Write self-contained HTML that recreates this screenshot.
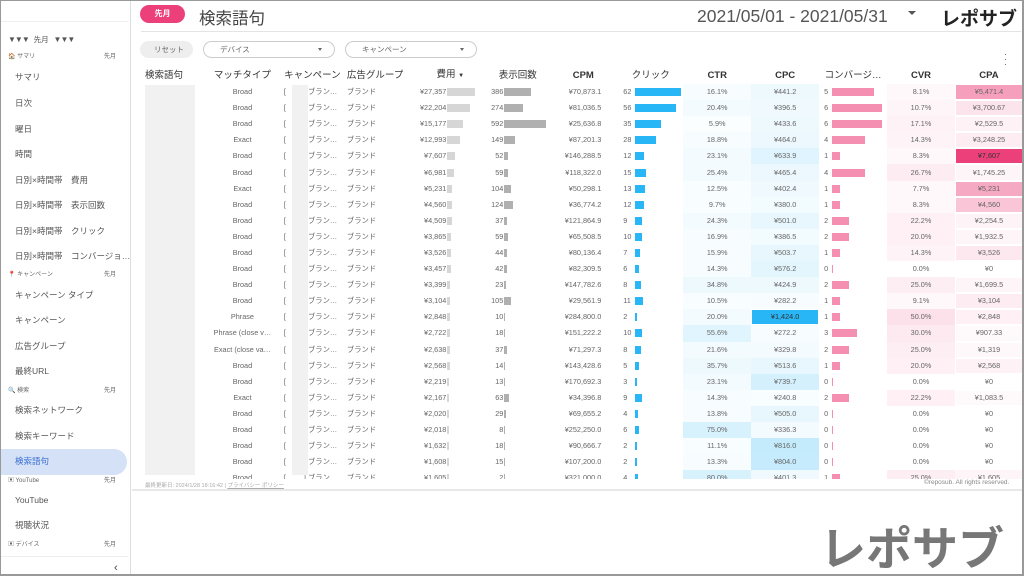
<!DOCTYPE html>
<html><head><meta charset="utf-8"><style>
*{margin:0;padding:0;box-sizing:border-box}
body{width:1024px;height:576px;overflow:hidden;background:#fff;font-family:"Liberation Sans","Noto Sans CJK JP",sans-serif;color:#555;position:relative}
.frame{position:absolute;left:0;top:0;width:1024px;height:576px;border:1px solid #999;border-bottom:2px solid #999;border-right:2px solid #999;pointer-events:none;z-index:10}
.sb{position:absolute;left:0;top:0;width:131px;height:576px;border-right:1px solid #ddd;background:#fff}
.sb .it{position:absolute;left:15px;font-size:8.5px;color:#555;line-height:10px;white-space:nowrap}
.sb .hd{position:absolute;left:8px;width:110px;font-size:6px;color:#666;line-height:8px}
.sb .hd span{position:absolute;right:2px;top:0}
.sel{position:absolute;left:0;top:449px;width:127px;height:26px;background:#d4e1f7;border-radius:0 13px 13px 0}
.abs{position:absolute;white-space:nowrap}
.pill{position:absolute;left:140px;top:5px;width:45px;height:18px;border-radius:9px;background:#ec407a;color:#fff;font-size:8px;text-align:center;line-height:18px;font-weight:bold}
.flt{position:absolute;top:41px;height:17px;border:1px solid #ccc;border-radius:9px;font-size:7.5px;line-height:15px;padding-left:16px;color:#666}
.flt.d:after{content:"";position:absolute;right:12px;top:6px;border:2.5px solid transparent;border-top:3px solid #666}
table{position:absolute;left:133px;top:67px;border-collapse:collapse;table-layout:fixed;font-size:7.3px;color:#666}
td,th{height:16.1px;padding:0;white-space:nowrap;overflow:hidden;vertical-align:middle;line-height:16px}
th{font-size:9.5px;color:#333;font-weight:normal;height:16px}
th.b{font-weight:bold}
td.m{text-align:center}
td.cp{padding-left:4px}
td.cp s{text-decoration:none;display:inline-block;width:20px}
.bx{display:flex;align-items:center;height:16px}
.bx i{font-style:normal;display:inline-block;text-align:right}
.bx b{display:inline-block;height:8px;margin-left:1px}
.e i{width:43px}.e b{background:#d6d6d6}
.f i{width:14px;margin-left:2px}.f b{background:#b0b0b0}
.k i{width:11px;text-align:left;margin-left:5px}.k b{background:#29b6f6}
.v i{width:7px;text-align:left;margin-left:5px}.v b{background:#f48fb1;height:8px}
td.r{text-align:right;padding-right:17px}
td.ct{text-align:center}
.wrap{position:absolute;left:133px;top:67px;width:890px;height:412px;overflow:hidden}
.wrap table{left:0;top:0}
.blur{position:absolute;background:#f1f1f1}
</style></head><body>
<div class="sb">
<div style="position:absolute;left:0;top:21px;width:128px;border-top:1px solid #eee"></div>
<div class="abs" style="left:8px;top:34px;font-size:8px;color:#555;letter-spacing:-1px">▼▼▼&nbsp;&nbsp;&nbsp; <span style="letter-spacing:0;font-size:7.5px">先月</span> &nbsp;&nbsp;&nbsp;▼▼▼</div>
<div class="hd" style="top:53px">🏠 サマリ<span>先月</span></div>
<div class="it" style="top:72px">サマリ</div>
<div class="it" style="top:98px">日次</div>
<div class="it" style="top:124px">曜日</div>
<div class="it" style="top:149px">時間</div>
<div class="it" style="top:175px">日別×時間帯　費用</div>
<div class="it" style="top:200px">日別×時間帯　表示回数</div>
<div class="it" style="top:226px">日別×時間帯　クリック</div>
<div class="it" style="top:251px">日別×時間帯　コンバージョ…</div>
<div class="hd" style="top:271px"><b style="color:#e53935">📍</b> キャンペーン<span>先月</span></div>
<div class="it" style="top:290px">キャンペーン タイプ</div>
<div class="it" style="top:315px">キャンペーン</div>
<div class="it" style="top:341px">広告グループ</div>
<div class="it" style="top:366px">最終URL</div>
<div class="hd" style="top:387px">🔍 検索<span>先月</span></div>
<div class="it" style="top:405px">検索ネットワーク</div>
<div class="it" style="top:431px">検索キーワード</div>
<div class="sel"></div>
<div class="it" style="top:456px;color:#3b6fd0">検索語句</div>
<div class="hd" style="top:477px">▣ YouTube<span>先月</span></div>
<div class="it" style="top:495px">YouTube</div>
<div class="it" style="top:520px">視聴状況</div>
<div class="hd" style="top:541px">▣ デバイス<span>先月</span></div>
<div style="position:absolute;left:0;top:556px;width:128px;border-top:1px solid #eee"></div>
<div class="abs" style="left:114px;top:562px;font-size:11px;color:#444">‹</div>
</div>

<div class="pill">先月</div>
<div class="abs" style="left:199px;top:5px;font-size:16.5px;color:#444">検索語句</div>
<div class="abs" style="left:697px;top:6px;font-size:17.5px;color:#555">2021/05/01 - 2021/05/31</div>
<div class="abs" style="left:908px;top:11px;border:4px solid transparent;border-top:4px solid #555"></div>
<div class="abs" style="left:941px;top:4px;font-size:19px;color:#222;font-weight:bold">レポサブ</div>
<div style="position:absolute;left:141px;top:31px;width:880px;border-top:1px solid #e4e4e4"></div>

<div class="flt" style="left:140px;width:53px;background:#eee;border-color:#eee;padding-left:13px">リセット</div>
<div class="flt d" style="left:203px;width:132px">デバイス</div>
<div class="flt d" style="left:345px;width:132px">キャンペーン</div>
<div class="abs" style="left:1004px;top:52px;font-size:9px;color:#555;line-height:5px">·<br>·<br>·</div>

<div class="wrap">
<div class="blur" style="left:12px;top:18px;width:50px;height:390px"></div>
<table>
<colgroup><col style="width:72px"><col style="width:75px"><col style="width:65px"><col style="width:55px"><col style="width:84px"><col style="width:61px"><col style="width:70px"><col style="width:65px"><col style="width:68px"><col style="width:68px"><col style="width:68px"><col style="width:68px"><col style="width:68px"></colgroup>
<tr><th style="text-align:left;padding-left:12px">検索語句</th><th>マッチタイプ</th><th>キャンペーン</th><th style="text-align:left;padding-left:2px">広告グループ</th><th style="padding-left:10px">費用 <span style="font-size:6px">▼</span></th><th>表示回数</th><th class="b">CPM</th><th>クリック</th><th class="b">CTR</th><th class="b">CPC</th><th>コンバージ…</th><th class="b">CVR</th><th class="b">CPA</th></tr>
<tr><td></td><td class="m">Broad</td><td class="cp"><s>[</s>] ブラン…</td><td>&nbsp;ブランド</td><td><div class="bx e"><i>¥27,357</i><b style="width:28px"></b></div></td><td><div class="bx f"><i>386</i><b style="width:27px"></b></div></td><td class="r">¥70,873.1</td><td><div class="bx k"><i>62</i><b style="width:46px"></b></div></td><td class="ct" style="background:rgba(41,182,246,.04)">16.1%</td><td class="ct" style="background:rgba(41,182,246,.08)">¥441.2</td><td><div class="bx v"><i>5</i><b style="width:42px"></b></div></td><td class="ct" style="background:rgba(236,64,122,.04)">8.1%</td><td class="ct" style="background:rgba(236,64,122,.5);box-shadow:inset 0 0 0 1px #fff">¥5,471.4</td></tr>
<tr><td></td><td class="m">Broad</td><td class="cp"><s>[</s>] ブラン…</td><td>&nbsp;ブランド</td><td><div class="bx e"><i>¥22,204</i><b style="width:23px"></b></div></td><td><div class="bx f"><i>274</i><b style="width:19px"></b></div></td><td class="r">¥81,036.5</td><td><div class="bx k"><i>56</i><b style="width:41px"></b></div></td><td class="ct" style="background:rgba(41,182,246,.05)">20.4%</td><td class="ct" style="background:rgba(41,182,246,.07)">¥396.5</td><td><div class="bx v"><i>6</i><b style="width:50px"></b></div></td><td class="ct" style="background:rgba(236,64,122,.05)">10.7%</td><td class="ct" style="background:rgba(236,64,122,.14);box-shadow:inset 0 0 0 1px #fff">¥3,700.67</td></tr>
<tr><td></td><td class="m">Broad</td><td class="cp"><s>[</s>] ブラン…</td><td>&nbsp;ブランド</td><td><div class="bx e"><i>¥15,177</i><b style="width:16px"></b></div></td><td><div class="bx f"><i>592</i><b style="width:42px"></b></div></td><td class="r">¥25,636.8</td><td><div class="bx k"><i>35</i><b style="width:26px"></b></div></td><td class="ct" style="background:rgba(41,182,246,.02)">5.9%</td><td class="ct" style="background:rgba(41,182,246,.08)">¥433.6</td><td><div class="bx v"><i>6</i><b style="width:50px"></b></div></td><td class="ct" style="background:rgba(236,64,122,.07)">17.1%</td><td class="ct" style="background:rgba(236,64,122,.07);box-shadow:inset 0 0 0 1px #fff">¥2,529.5</td></tr>
<tr><td></td><td class="m">Exact</td><td class="cp"><s>[</s>] ブラン…</td><td>&nbsp;ブランド</td><td><div class="bx e"><i>¥12,993</i><b style="width:13px"></b></div></td><td><div class="bx f"><i>149</i><b style="width:11px"></b></div></td><td class="r">¥87,201.3</td><td><div class="bx k"><i>28</i><b style="width:21px"></b></div></td><td class="ct" style="background:rgba(41,182,246,.04)">18.8%</td><td class="ct" style="background:rgba(41,182,246,.09)">¥464.0</td><td><div class="bx v"><i>4</i><b style="width:33px"></b></div></td><td class="ct" style="background:rgba(236,64,122,.06)">14.3%</td><td class="ct" style="background:rgba(236,64,122,.1);box-shadow:inset 0 0 0 1px #fff">¥3,248.25</td></tr>
<tr><td></td><td class="m">Broad</td><td class="cp"><s>[</s>] ブラン…</td><td>&nbsp;ブランド</td><td><div class="bx e"><i>¥7,607</i><b style="width:8px"></b></div></td><td><div class="bx f"><i>52</i><b style="width:4px"></b></div></td><td class="r">¥146,288.5</td><td><div class="bx k"><i>12</i><b style="width:9px"></b></div></td><td class="ct" style="background:rgba(41,182,246,.05)">23.1%</td><td class="ct" style="background:rgba(41,182,246,.15)">¥633.9</td><td><div class="bx v"><i>1</i><b style="width:8px"></b></div></td><td class="ct" style="background:rgba(236,64,122,.04)">8.3%</td><td class="ct" style="background:#ec407a;color:#333;box-shadow:inset 0 0 0 1px #fff">¥7,607</td></tr>
<tr><td></td><td class="m">Broad</td><td class="cp"><s>[</s>] ブラン…</td><td>&nbsp;ブランド</td><td><div class="bx e"><i>¥6,981</i><b style="width:7px"></b></div></td><td><div class="bx f"><i>59</i><b style="width:4px"></b></div></td><td class="r">¥118,322.0</td><td><div class="bx k"><i>15</i><b style="width:11px"></b></div></td><td class="ct" style="background:rgba(41,182,246,.05)">25.4%</td><td class="ct" style="background:rgba(41,182,246,.09)">¥465.4</td><td><div class="bx v"><i>4</i><b style="width:33px"></b></div></td><td class="ct" style="background:rgba(236,64,122,.1)">26.7%</td><td class="ct" style="background:rgba(236,64,122,.05);box-shadow:inset 0 0 0 1px #fff">¥1,745.25</td></tr>
<tr><td></td><td class="m">Exact</td><td class="cp"><s>[</s>] ブラン…</td><td>&nbsp;ブランド</td><td><div class="bx e"><i>¥5,231</i><b style="width:5px"></b></div></td><td><div class="bx f"><i>104</i><b style="width:7px"></b></div></td><td class="r">¥50,298.1</td><td><div class="bx k"><i>13</i><b style="width:10px"></b></div></td><td class="ct" style="background:rgba(41,182,246,.03)">12.5%</td><td class="ct" style="background:rgba(41,182,246,.07)">¥402.4</td><td><div class="bx v"><i>1</i><b style="width:8px"></b></div></td><td class="ct" style="background:rgba(236,64,122,.04)">7.7%</td><td class="ct" style="background:rgba(236,64,122,.45);box-shadow:inset 0 0 0 1px #fff">¥5,231</td></tr>
<tr><td></td><td class="m">Broad</td><td class="cp"><s>[</s>] ブラン…</td><td>&nbsp;ブランド</td><td><div class="bx e"><i>¥4,560</i><b style="width:5px"></b></div></td><td><div class="bx f"><i>124</i><b style="width:9px"></b></div></td><td class="r">¥36,774.2</td><td><div class="bx k"><i>12</i><b style="width:9px"></b></div></td><td class="ct" style="background:rgba(41,182,246,.03)">9.7%</td><td class="ct" style="background:rgba(41,182,246,.06)">¥380.0</td><td><div class="bx v"><i>1</i><b style="width:8px"></b></div></td><td class="ct" style="background:rgba(236,64,122,.04)">8.3%</td><td class="ct" style="background:rgba(236,64,122,.3);box-shadow:inset 0 0 0 1px #fff">¥4,560</td></tr>
<tr><td></td><td class="m">Broad</td><td class="cp"><s>[</s>] ブラン…</td><td>&nbsp;ブランド</td><td><div class="bx e"><i>¥4,509</i><b style="width:5px"></b></div></td><td><div class="bx f"><i>37</i><b style="width:3px"></b></div></td><td class="r">¥121,864.9</td><td><div class="bx k"><i>9</i><b style="width:7px"></b></div></td><td class="ct" style="background:rgba(41,182,246,.05)">24.3%</td><td class="ct" style="background:rgba(41,182,246,.11)">¥501.0</td><td><div class="bx v"><i>2</i><b style="width:17px"></b></div></td><td class="ct" style="background:rgba(236,64,122,.08)">22.2%</td><td class="ct" style="background:rgba(236,64,122,.06);box-shadow:inset 0 0 0 1px #fff">¥2,254.5</td></tr>
<tr><td></td><td class="m">Broad</td><td class="cp"><s>[</s>] ブラン…</td><td>&nbsp;ブランド</td><td><div class="bx e"><i>¥3,865</i><b style="width:4px"></b></div></td><td><div class="bx f"><i>59</i><b style="width:4px"></b></div></td><td class="r">¥65,508.5</td><td><div class="bx k"><i>10</i><b style="width:7px"></b></div></td><td class="ct" style="background:rgba(41,182,246,.04)">16.9%</td><td class="ct" style="background:rgba(41,182,246,.06)">¥386.5</td><td><div class="bx v"><i>2</i><b style="width:17px"></b></div></td><td class="ct" style="background:rgba(236,64,122,.08)">20.0%</td><td class="ct" style="background:rgba(236,64,122,.05);box-shadow:inset 0 0 0 1px #fff">¥1,932.5</td></tr>
<tr><td></td><td class="m">Broad</td><td class="cp"><s>[</s>] ブラン…</td><td>&nbsp;ブランド</td><td><div class="bx e"><i>¥3,526</i><b style="width:4px"></b></div></td><td><div class="bx f"><i>44</i><b style="width:3px"></b></div></td><td class="r">¥80,136.4</td><td><div class="bx k"><i>7</i><b style="width:5px"></b></div></td><td class="ct" style="background:rgba(41,182,246,.04)">15.9%</td><td class="ct" style="background:rgba(41,182,246,.11)">¥503.7</td><td><div class="bx v"><i>1</i><b style="width:8px"></b></div></td><td class="ct" style="background:rgba(236,64,122,.06)">14.3%</td><td class="ct" style="background:rgba(236,64,122,.12);box-shadow:inset 0 0 0 1px #fff">¥3,526</td></tr>
<tr><td></td><td class="m">Broad</td><td class="cp"><s>[</s>] ブラン…</td><td>&nbsp;ブランド</td><td><div class="bx e"><i>¥3,457</i><b style="width:4px"></b></div></td><td><div class="bx f"><i>42</i><b style="width:3px"></b></div></td><td class="r">¥82,309.5</td><td><div class="bx k"><i>6</i><b style="width:4px"></b></div></td><td class="ct" style="background:rgba(41,182,246,.04)">14.3%</td><td class="ct" style="background:rgba(41,182,246,.13)">¥576.2</td><td><div class="bx v"><i>0</i><b style="width:1px"></b></div></td><td class="ct">0.0%</td><td class="ct">¥0</td></tr>
<tr><td></td><td class="m">Broad</td><td class="cp"><s>[</s>] ブラン…</td><td>&nbsp;ブランド</td><td><div class="bx e"><i>¥3,399</i><b style="width:3px"></b></div></td><td><div class="bx f"><i>23</i><b style="width:2px"></b></div></td><td class="r">¥147,782.6</td><td><div class="bx k"><i>8</i><b style="width:6px"></b></div></td><td class="ct" style="background:rgba(41,182,246,.08)">34.8%</td><td class="ct" style="background:rgba(41,182,246,.08)">¥424.9</td><td><div class="bx v"><i>2</i><b style="width:17px"></b></div></td><td class="ct" style="background:rgba(236,64,122,.09)">25.0%</td><td class="ct" style="background:rgba(236,64,122,.05);box-shadow:inset 0 0 0 1px #fff">¥1,699.5</td></tr>
<tr><td></td><td class="m">Broad</td><td class="cp"><s>[</s>] ブラン…</td><td>&nbsp;ブランド</td><td><div class="bx e"><i>¥3,104</i><b style="width:3px"></b></div></td><td><div class="bx f"><i>105</i><b style="width:7px"></b></div></td><td class="r">¥29,561.9</td><td><div class="bx k"><i>11</i><b style="width:8px"></b></div></td><td class="ct" style="background:rgba(41,182,246,.03)">10.5%</td><td class="ct" style="background:rgba(41,182,246,.04)">¥282.2</td><td><div class="bx v"><i>1</i><b style="width:8px"></b></div></td><td class="ct" style="background:rgba(236,64,122,.04)">9.1%</td><td class="ct" style="background:rgba(236,64,122,.1);box-shadow:inset 0 0 0 1px #fff">¥3,104</td></tr>
<tr><td></td><td class="m">Phrase</td><td class="cp"><s>[</s>] ブラン…</td><td>&nbsp;ブランド</td><td><div class="bx e"><i>¥2,848</i><b style="width:3px"></b></div></td><td><div class="bx f"><i>10</i><b style="width:1px"></b></div></td><td class="r">¥284,800.0</td><td><div class="bx k"><i>2</i><b style="width:2px"></b></div></td><td class="ct" style="background:rgba(41,182,246,.05)">20.0%</td><td class="ct" style="background:#29b6f6;color:#333;box-shadow:inset 0 0 0 1px #fff">¥1,424.0</td><td><div class="bx v"><i>1</i><b style="width:8px"></b></div></td><td class="ct" style="background:rgba(236,64,122,.16)">50.0%</td><td class="ct" style="background:rgba(236,64,122,.08);box-shadow:inset 0 0 0 1px #fff">¥2,848</td></tr>
<tr><td></td><td class="m">Phrase (close v…</td><td class="cp"><s>[</s>] ブラン…</td><td>&nbsp;ブランド</td><td><div class="bx e"><i>¥2,722</i><b style="width:3px"></b></div></td><td><div class="bx f"><i>18</i><b style="width:1px"></b></div></td><td class="r">¥151,222.2</td><td><div class="bx k"><i>10</i><b style="width:7px"></b></div></td><td class="ct" style="background:rgba(41,182,246,.14)">55.6%</td><td class="ct" style="background:rgba(41,182,246,.04)">¥272.2</td><td><div class="bx v"><i>3</i><b style="width:25px"></b></div></td><td class="ct" style="background:rgba(236,64,122,.11)">30.0%</td><td class="ct" style="background:rgba(236,64,122,.03);box-shadow:inset 0 0 0 1px #fff">¥907.33</td></tr>
<tr><td></td><td class="m">Exact (close va…</td><td class="cp"><s>[</s>] ブラン…</td><td>&nbsp;ブランド</td><td><div class="bx e"><i>¥2,638</i><b style="width:3px"></b></div></td><td><div class="bx f"><i>37</i><b style="width:3px"></b></div></td><td class="r">¥71,297.3</td><td><div class="bx k"><i>8</i><b style="width:6px"></b></div></td><td class="ct" style="background:rgba(41,182,246,.05)">21.6%</td><td class="ct" style="background:rgba(41,182,246,.05)">¥329.8</td><td><div class="bx v"><i>2</i><b style="width:17px"></b></div></td><td class="ct" style="background:rgba(236,64,122,.09)">25.0%</td><td class="ct" style="background:rgba(236,64,122,.04);box-shadow:inset 0 0 0 1px #fff">¥1,319</td></tr>
<tr><td></td><td class="m">Broad</td><td class="cp"><s>[</s>] ブラン…</td><td>&nbsp;ブランド</td><td><div class="bx e"><i>¥2,568</i><b style="width:3px"></b></div></td><td><div class="bx f"><i>14</i><b style="width:1px"></b></div></td><td class="r">¥143,428.6</td><td><div class="bx k"><i>5</i><b style="width:4px"></b></div></td><td class="ct" style="background:rgba(41,182,246,.08)">35.7%</td><td class="ct" style="background:rgba(41,182,246,.11)">¥513.6</td><td><div class="bx v"><i>1</i><b style="width:8px"></b></div></td><td class="ct" style="background:rgba(236,64,122,.08)">20.0%</td><td class="ct" style="background:rgba(236,64,122,.07);box-shadow:inset 0 0 0 1px #fff">¥2,568</td></tr>
<tr><td></td><td class="m">Broad</td><td class="cp"><s>[</s>] ブラン…</td><td>&nbsp;ブランド</td><td><div class="bx e"><i>¥2,219</i><b style="width:2px"></b></div></td><td><div class="bx f"><i>13</i><b style="width:1px"></b></div></td><td class="r">¥170,692.3</td><td><div class="bx k"><i>3</i><b style="width:2px"></b></div></td><td class="ct" style="background:rgba(41,182,246,.05)">23.1%</td><td class="ct" style="background:rgba(41,182,246,.2)">¥739.7</td><td><div class="bx v"><i>0</i><b style="width:1px"></b></div></td><td class="ct">0.0%</td><td class="ct">¥0</td></tr>
<tr><td></td><td class="m">Exact</td><td class="cp"><s>[</s>] ブラン…</td><td>&nbsp;ブランド</td><td><div class="bx e"><i>¥2,167</i><b style="width:2px"></b></div></td><td><div class="bx f"><i>63</i><b style="width:5px"></b></div></td><td class="r">¥34,396.8</td><td><div class="bx k"><i>9</i><b style="width:7px"></b></div></td><td class="ct" style="background:rgba(41,182,246,.04)">14.3%</td><td class="ct" style="background:rgba(41,182,246,.03)">¥240.8</td><td><div class="bx v"><i>2</i><b style="width:17px"></b></div></td><td class="ct" style="background:rgba(236,64,122,.08)">22.2%</td><td class="ct" style="background:rgba(236,64,122,.03);box-shadow:inset 0 0 0 1px #fff">¥1,083.5</td></tr>
<tr><td></td><td class="m">Broad</td><td class="cp"><s>[</s>] ブラン…</td><td>&nbsp;ブランド</td><td><div class="bx e"><i>¥2,020</i><b style="width:2px"></b></div></td><td><div class="bx f"><i>29</i><b style="width:2px"></b></div></td><td class="r">¥69,655.2</td><td><div class="bx k"><i>4</i><b style="width:3px"></b></div></td><td class="ct" style="background:rgba(41,182,246,.04)">13.8%</td><td class="ct" style="background:rgba(41,182,246,.11)">¥505.0</td><td><div class="bx v"><i>0</i><b style="width:1px"></b></div></td><td class="ct">0.0%</td><td class="ct">¥0</td></tr>
<tr><td></td><td class="m">Broad</td><td class="cp"><s>[</s>] ブラン…</td><td>&nbsp;ブランド</td><td><div class="bx e"><i>¥2,018</i><b style="width:2px"></b></div></td><td><div class="bx f"><i>8</i><b style="width:1px"></b></div></td><td class="r">¥252,250.0</td><td><div class="bx k"><i>6</i><b style="width:4px"></b></div></td><td class="ct" style="background:rgba(41,182,246,.18)">75.0%</td><td class="ct" style="background:rgba(41,182,246,.05)">¥336.3</td><td><div class="bx v"><i>0</i><b style="width:1px"></b></div></td><td class="ct">0.0%</td><td class="ct">¥0</td></tr>
<tr><td></td><td class="m">Broad</td><td class="cp"><s>[</s>] ブラン…</td><td>&nbsp;ブランド</td><td><div class="bx e"><i>¥1,632</i><b style="width:2px"></b></div></td><td><div class="bx f"><i>18</i><b style="width:1px"></b></div></td><td class="r">¥90,666.7</td><td><div class="bx k"><i>2</i><b style="width:2px"></b></div></td><td class="ct" style="background:rgba(41,182,246,.03)">11.1%</td><td class="ct" style="background:rgba(41,182,246,.28)">¥816.0</td><td><div class="bx v"><i>0</i><b style="width:1px"></b></div></td><td class="ct">0.0%</td><td class="ct">¥0</td></tr>
<tr><td></td><td class="m">Broad</td><td class="cp"><s>[</s>] ブラン…</td><td>&nbsp;ブランド</td><td><div class="bx e"><i>¥1,608</i><b style="width:2px"></b></div></td><td><div class="bx f"><i>15</i><b style="width:1px"></b></div></td><td class="r">¥107,200.0</td><td><div class="bx k"><i>2</i><b style="width:2px"></b></div></td><td class="ct" style="background:rgba(41,182,246,.04)">13.3%</td><td class="ct" style="background:rgba(41,182,246,.27)">¥804.0</td><td><div class="bx v"><i>0</i><b style="width:1px"></b></div></td><td class="ct">0.0%</td><td class="ct">¥0</td></tr>
<tr><td></td><td class="m">Broad</td><td class="cp"><s>[</s>] ブラン…</td><td>&nbsp;ブランド</td><td><div class="bx e"><i>¥1,605</i><b style="width:2px"></b></div></td><td><div class="bx f"><i>2</i><b style="width:1px"></b></div></td><td class="r">¥321,000.0</td><td><div class="bx k"><i>4</i><b style="width:3px"></b></div></td><td class="ct" style="background:rgba(41,182,246,.18)">80.0%</td><td class="ct" style="background:rgba(41,182,246,.07)">¥401.3</td><td><div class="bx v"><i>1</i><b style="width:8px"></b></div></td><td class="ct" style="background:rgba(236,64,122,.09)">25.0%</td><td class="ct" style="background:rgba(236,64,122,.05)">¥1,605</td></tr>
</table>
<div class="blur" style="left:159px;top:18px;width:16px;height:390px"></div>
</div>
<div class="abs" style="left:145px;top:481px;font-size:5.5px;color:#aaa">最終更新日: 2024/1/28 18:16:42 | <u>プライバシー ポリシー</u></div>
<div class="abs" style="left:924px;top:479px;font-size:6.5px;color:#888">©reposub. All rights reserved.</div>
<div style="position:absolute;left:132px;top:489px;width:891px;border-top:2px solid #e8e8e8"></div>
<div class="abs" style="left:820px;top:522px;font-size:46px;color:#777;line-height:54px;font-weight:bold">レポサブ</div>
<div class="frame"></div>
</body></html>
